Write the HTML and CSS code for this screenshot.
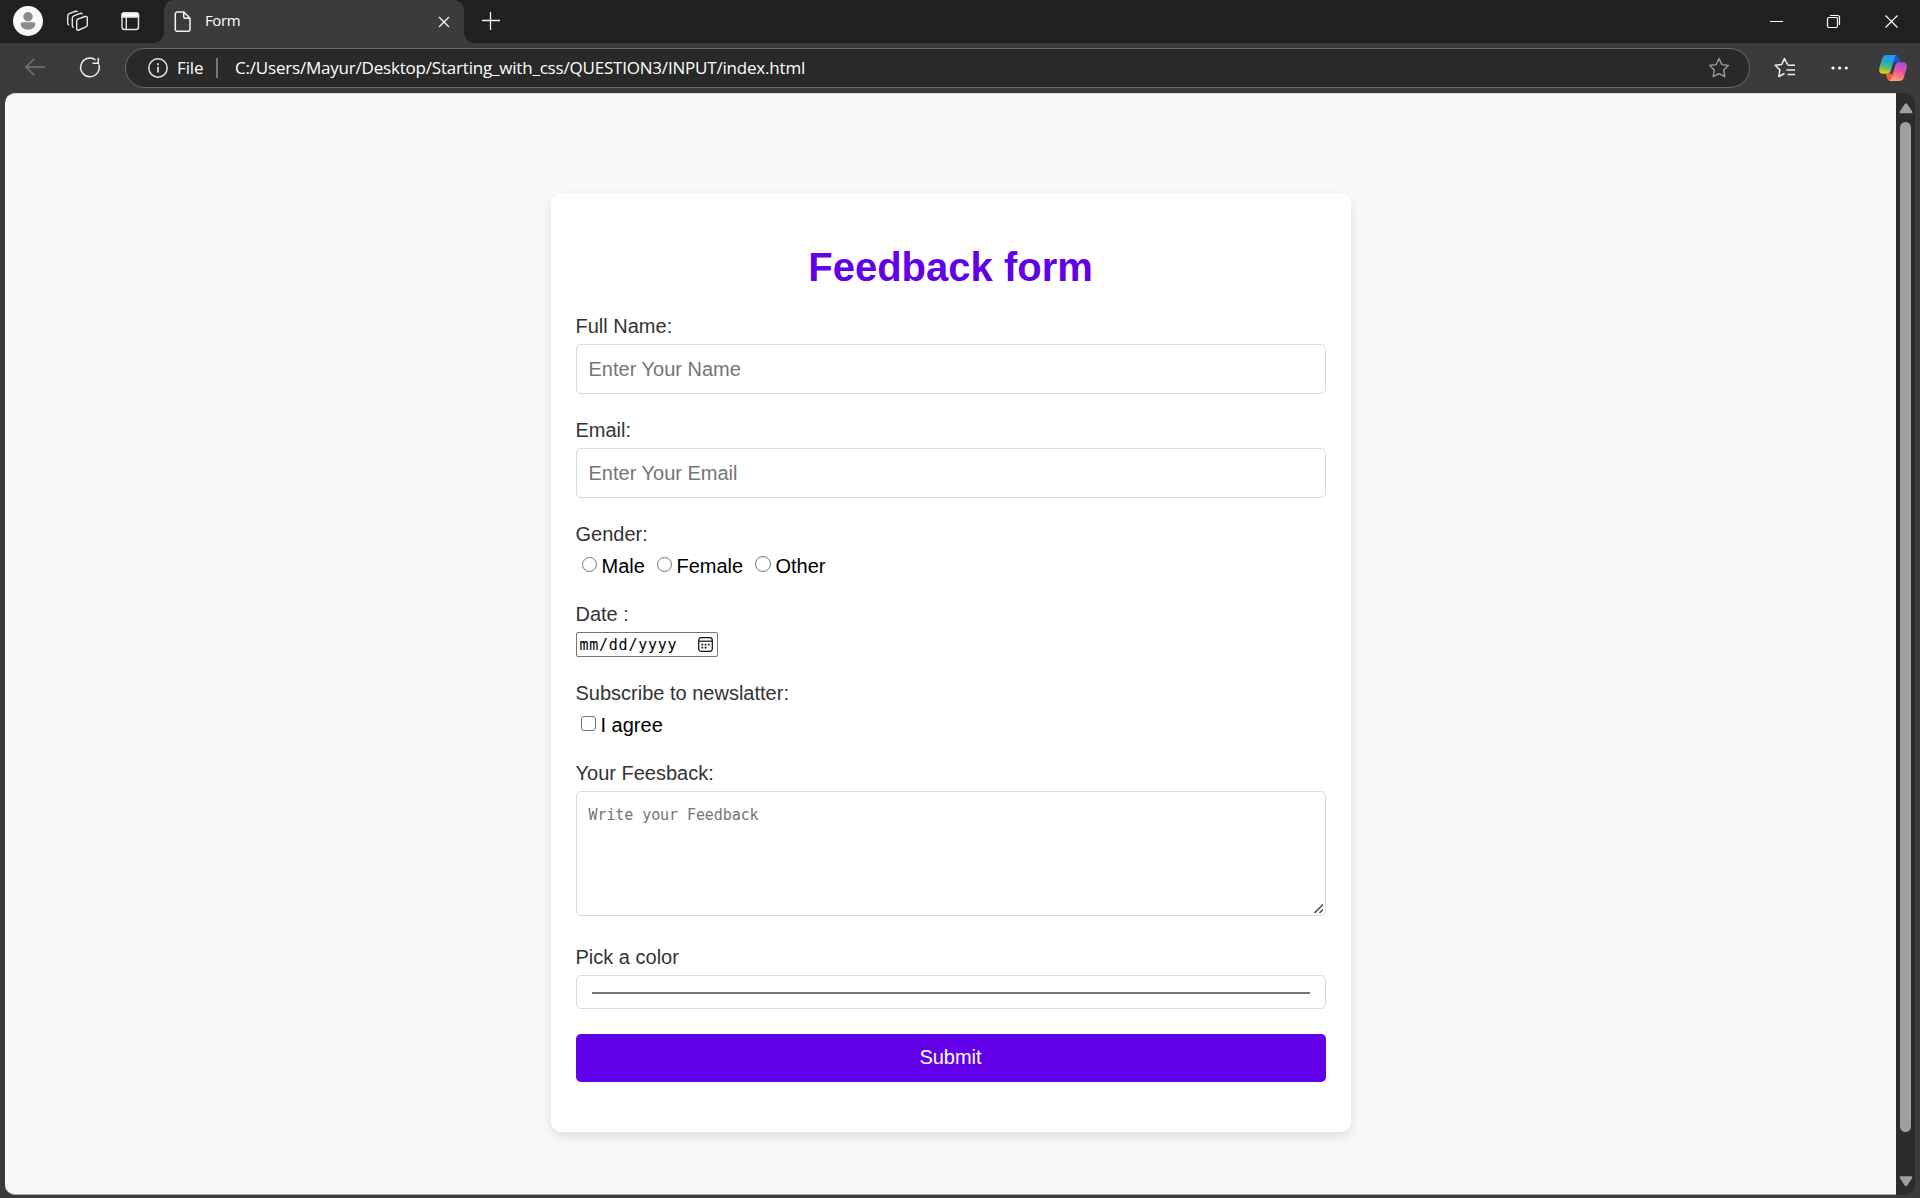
FILE: index.html
```html
<!DOCTYPE html>
<html lang="en">
<head>
<meta charset="utf-8">
<title>Form</title>
<link rel="stylesheet" href="styles.css">
</head>
<body>
<header class="titlebar">
  <svg class="title-tools" width="160" height="43" viewBox="0 0 160 43" fill="none" stroke="#e6e6e6" stroke-width="1.4">
    <circle cx="28" cy="21" r="15" fill="#f8f8f8" stroke="none"/>
    <circle cx="28" cy="16.700" r="4.700" fill="#8b8b8b" stroke="none"/>
    <path d="M22.500 22.300h11a1.800 1.800 0 0 1 1.800 1.800c0 3.500-3 5.600-7.300 5.600s-7.300-2.100-7.300-5.600a1.800 1.800 0 0 1 1.800-1.800z" fill="#8b8b8b" stroke="none"/>
    <path d="M78.300 18.800l6.700-2.300q2.300-.6 2.300 1.600v6.700q0 1.500-1.400 2l-7 3.200q-2.200.9-2.200-1.400v-7.500q0-1.700 1.600-2.300zM73.600 27.500q-1.300-.4-1.300-2v-7.300q0-1.800 1.500-2.400l6.300-2.400q1.800-.5 2.300 1M69 25q-1.300-.4-1.300-2v-7q0-1.800 1.500-2.400l6.300-2.300q1.500-.3 2 .7"/>
    <rect x="122" y="13" width="16.500" height="16.500" rx="2.500"/>
    <path d="M122 15a2 2 0 0 1 2-2h12.500a2 2 0 0 1 2 2v2h-16.500z" fill="#fff"/>
    <path d="M126.300 17v12"/>
  </svg>
  <div class="tab">
    <svg width="18" height="22" viewBox="0 0 18 22" fill="none" stroke="#f4f4f4" stroke-width="1.500"><path d="M3.500 1h6.300L16 7.200v11.300a1.700 1.700 0 0 1-1.700 1.700H3a1.700 1.700 0 0 1-1.700-1.700V3A2 2 0 0 1 3.500 1zM9.700 1v4.800q0 1.500 1.500 1.500H16"/></svg>
    <span class="tab-title">Form</span>
    <svg class="tab-close" width="12" height="12" viewBox="0 0 12 12" stroke="#f4f4f4" stroke-width="1.400"><path d="M1 1l10 10M11 1L1 11"/></svg>
  </div>
  <svg class="new-tab" width="18" height="18" viewBox="0 0 18 18" stroke="#f4f4f4" stroke-width="1.300"><path d="M0 8.500h18M8.500 0v18"/></svg>
  <svg class="window-controls" width="150" height="43" viewBox="0 0 150 43" fill="none" stroke="#fff" stroke-width="1.200">
    <path d="M0 21.500h13M115.500 15.500l12 12M127.500 15.500l-12 12"/>
    <rect x="57.500" y="17.500" width="10" height="10" rx="1.500"/>
    <path d="M60 15.500h7.500a2 2 0 0 1 2 2V25"/>
  </svg>
</header>
<nav class="toolbar">
  <svg class="nav-icons" width="101" height="40" viewBox="0 0 101 40" fill="none" stroke-width="1.500">
    <path d="M21 19H1.500M10.500 10.500L2 19l8.500 8.500" stroke="#777"/>
    <path d="M74.800 16.500a9.300 9.300 0 1 1-3.300-4.600M74.300 10v5.200h-5.800" stroke="#eee"/>
  </svg>
  <div class="address">
    <svg width="20" height="20" viewBox="0 0 20 20" fill="none" stroke="#eee" stroke-width="1.400"><circle cx="10" cy="10" r="9.200"/><path d="M10 8.800v5.700M10 5.300v1.900" stroke-width="1.600"/></svg>
    <span class="scheme">File</span>
    <span class="divider"></span>
    <span class="url">C:/Users/Mayur/Desktop/Starting_with_css/QUESTION3/INPUT/index.html</span>
    <svg class="star" width="22" height="22" viewBox="0 0 22 22" fill="none" stroke="#999" stroke-width="1.400" stroke-linejoin="round"><path d="M11 1.500l2.900 6.100 6.500.9-4.700 4.600 1.100 6.600-5.800-3.100-5.800 3.100 1.100-6.600-4.700-4.600 6.500-.9z"/></svg>
  </div>
  <svg class="favorites" width="21" height="22" viewBox="0 0 21 22" fill="none" stroke="#f0f0f0" stroke-width="1.500" stroke-linejoin="round"><path d="M14 7h-.800L10.500 1.500 7.700 7.400l-6.500.9 4.700 4.600-1.100 6.600 5.700-3M13.500 8.200H21M12.500 13H21M13.500 17.500H21"/></svg>
  <svg class="more" width="18" height="4" viewBox="0 0 18 4" fill="#fff"><circle cx="2" cy="2" r="1.600"/><circle cx="8.700" cy="2" r="1.600"/><circle cx="15.300" cy="2" r="1.600"/></svg>
  <svg class="copilot" width="28" height="26" viewBox="0 0 28 26">
    <defs>
      <linearGradient id="cool" x1=".6" y1="0" x2=".35" y2="1"><stop offset="0" stop-color="#159bf0"/><stop offset=".4" stop-color="#25a9d0"/><stop offset=".7" stop-color="#64bd62"/><stop offset="1" stop-color="#f5cf08"/></linearGradient>
      <linearGradient id="warm" x1=".6" y1="0" x2=".35" y2="1"><stop offset="0" stop-color="#a84bea"/><stop offset=".5" stop-color="#f05599"/><stop offset="1" stop-color="#ffa765"/></linearGradient>
    </defs>
    <path d="M13 0h3.500c2 0 2.900 1.200 3.500 3l1.300 4.500h-6z" fill="#1855d0"/>
    <path d="M15 26h-3.500c-2 0-2.900-1.200-3.500-3l-1.300-4.500h6z" fill="#f45b36"/>
    <path d="M7.500 0H18c-1.600.7-2.300 2-3 4.500l-3 10.500c-.8 2.700-2 3.800-4.500 3.800H3.700C.5 18.800-.4 16 .5 12.500L3 4C3.800 1.500 5.300 0 7.500 0z" fill="url(#cool)"/>
    <path d="M20.500 26H10c1.600-.7 2.300-2 3-4.500L16 11c.8-2.700 2-3.800 4.500-3.800h3.800c3.200 0 4.100 2.800 3.200 6.300L25 22c-.8 2.500-2.300 4-4.500 4z" fill="url(#warm)"/>
  </svg>
</nav>
<div class="viewport">
  <main class="page">
    <form class="card">
      <h1>Feedback form</h1>
      <label for="name">Full Name:</label>
      <input class="field" id="name" type="text" placeholder="Enter Your Name">
      <label for="email">Email:</label>
      <input class="field" id="email" type="email" placeholder="Enter Your Email">
      <label>Gender:</label>
      <div class="choices">
        <input class="radio" type="radio" name="gender"><span class="male">Male</span>
        <input class="radio" type="radio" name="gender"><span class="female">Female</span>
        <input class="radio other" type="radio" name="gender"><span>Other</span>
      </div>
      <label>Date :</label>
      <div class="date"><span>mm/dd/yyyy</span>
        <svg width="15" height="15" viewBox="0 0 15 15" fill="none" stroke="#111" stroke-width="1.200"><rect x=".7" y=".7" width="13.600" height="13.600" rx="2.500"/><path d="M.7 4.200h13.600"/><path d="M3.500 7.700h8.500M3.500 10.700h6" stroke-width="1.700" stroke-dasharray="1.700 1.500"/></svg>
      </div>
      <label>Subscribe to newslatter:</label>
      <div class="choices"><input class="check" type="checkbox"><span>I agree</span></div>
      <label for="message">Your Feesback:</label>
      <div class="message">
        <textarea id="message" placeholder="Write your Feedback"></textarea>
        <svg class="grip" width="10" height="10" viewBox="0 0 10 10" stroke="#555" stroke-width="1.600"><path d="M.5 9L9 .5M5.500 9L9 5.500"/></svg>
      </div>
      <label>Pick a color</label>
      <div class="color"><span></span></div>
      <button type="button">Submit</button>
    </form>
  </main>
  <div class="scrollbar">
    <svg width="14" height="11" viewBox="0 0 14 11" fill="#9f9f9f"><path d="M5.800 1q1.200-1.500 2.400 0l5 7.500q.8 1.800-1 1.800H1.800q-1.800 0-1-1.800z"/></svg>
    <span class="thumb"></span>
    <svg class="down" width="14" height="11" viewBox="0 0 14 11" fill="#9f9f9f"><path d="M5.800 9.500q1.200 1.500 2.400 0l5-7.500q.8-1.800-1-1.800H1.800Q0 .2.800 2z"/></svg>
  </div>
</div>
</body>
</html>
```
FILE: styles.css
```css
* { box-sizing: border-box; }
body {
  margin: 0;
  width: 1920px;
  height: 1198px;
  overflow: hidden;
  display: flex;
  flex-direction: column;
  background: #3b3b3b;
  font-family: "Liberation Sans", Arial, sans-serif;
}
svg { display: block; flex: none; }

/* Browser chrome */
.titlebar {
  height: 43px;
  flex: none;
  display: flex;
  background: #202020;
}
.tab {
  position: relative;
  width: 300px;
  margin-left: 4px;
  padding: 0 14px 0 10px;
  display: flex;
  align-items: center;
  background: #3b3b3b;
  border-radius: 10px 10px 0 0;
  color: #fff;
  font: 15px/20px "Open Sans", sans-serif;
}
.tab::before, .tab::after {
  content: "";
  position: absolute;
  bottom: 0;
  width: 10px;
  height: 10px;
}
.tab::before { left: -10px; background: radial-gradient(circle at 0 0, #202020 9.500px, #3b3b3b 10px); }
.tab::after { right: -10px; background: radial-gradient(circle at 100% 0, #202020 9.500px, #3b3b3b 10px); }
.tab-title { margin: -4px 0 0 13px; letter-spacing: -.4px; }
.tab-close { margin-left: auto; }
.new-tab { margin: 12px 0 0 18px; }
.window-controls { margin-left: auto; }
.toolbar {
  height: 50px;
  flex: none;
  display: flex;
  align-items: center;
  padding: 0 13px 0 24px;
}
.address {
  width: 1625px;
  height: 40px;
  display: flex;
  align-items: center;
  padding: 0 19px 0 22px;
  border: 1px solid #696969;
  border-radius: 20px;
  background: #292929;
  color: #fff;
  font: 17px/24px "Open Sans", sans-serif;
}
.scheme { width: 26px; margin: -1px 0 0 9px; letter-spacing: -.1px; }
.divider { width: 2px; height: 20px; margin: 0 17px 0 13px; background: #777; }
.url { margin-top: -1px; white-space: nowrap; letter-spacing: -.2px; }
.star { margin-left: auto; }
.favorites { margin-left: 24px; }
.more { margin-left: 36px; }
.copilot { margin-left: auto; }

.viewport { height: 1102px; margin: 0 5px; display: flex; }
.page {
  flex: 1;
  display: flex;
  justify-content: center;
  align-items: flex-start;
  padding-top: 99px;
  background: #f9f9f9;
  border-top: 1px solid #ddd;
  border-bottom: 1px solid #aaa;
  border-radius: 10px 0 0 10px;
}
.scrollbar {
  width: 19px;
  display: flex;
  flex-direction: column;
  align-items: center;
  padding: 10px 0 8px;
  background: #2c2c2c;
  border-radius: 0 10px 10px 0;
}
.thumb { width: 11px; height: 1010px; margin-top: 8px; border-radius: 6px; background: #9f9f9f; }
.down { margin-top: auto; }

/* Feedback form */
.card {
  width: 800px;
  height: 939px;
  padding: 52px 25px 50px;
  display: flex;
  flex-direction: column;
  border-radius: 10px;
  background: #fff;
  box-shadow: 0 5px 12px rgba(0, 0, 0, .1);
  font-size: 20px;
  line-height: 23px;
}
h1 {
  margin: 0 0 25px;
  color: #6200ea;
  font-size: 40px;
  line-height: 45px;
  text-align: center;
}
label { margin-bottom: 6px; color: #333; }
.field, textarea {
  width: 100%;
  padding: 12px;
  border: 1px solid #dadada;
  border-radius: 5px;
  outline: 0;
  background: #fff;
}
.field { height: 50px; margin: 0 0 25px; font: 20px/24px "Liberation Sans", Arial, sans-serif; }
::placeholder { color: #757575; opacity: 1; }
.choices { height: 26px; margin-bottom: 25px; padding: 3px 0 0 5px; display: flex; color: #000; }
.radio, .check {
  appearance: none;
  width: 15px;
  height: 15px;
  margin: 2px 5px 0 1px;
  border: 1px solid #767676;
  border-radius: 50%;
  background: #fff;
}
.male { width: 54px; }
.female { width: 77px; }
.other { width: 16px; height: 16px; margin-top: 1px; }
.check { margin: 2px 5px 0 0; border-radius: 3px; }
.date {
  width: 142px;
  height: 25px;
  margin-bottom: 25px;
  padding: 0 4px 0 3px;
  display: flex;
  align-items: center;
  justify-content: space-between;
  border: 1px solid #767676;
  border-radius: 2px;
  color: #000;
  font: 15px/20px "DejaVu Sans Mono", monospace;
  letter-spacing: .75px;
}
.message { position: relative; height: 125px; margin-bottom: 30px; }
textarea {
  display: block;
  height: 125px;
  padding-top: 13px;
  resize: none;
  font: 15px/20px "DejaVu Sans Mono", monospace;
  letter-spacing: -.08px;
}
.grip { position: absolute; right: 2px; bottom: 2px; }
.color {
  height: 34px;
  margin-bottom: 25px;
  padding: 0 15px;
  display: flex;
  align-items: center;
  border: 1px solid #dadada;
  border-radius: 5px;
}
.color span { flex: 1; height: 2px; margin-top: 2px; background: #767676; }
button {
  height: 48px;
  padding: 0 0 2px;
  border: 0;
  border-radius: 5px;
  background: #6200ea;
  color: #fff;
  font: 20px "Liberation Sans", Arial, sans-serif;
}
```
